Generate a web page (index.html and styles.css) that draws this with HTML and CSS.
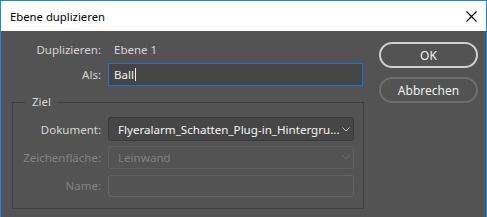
FILE: index.html
```html
<!DOCTYPE html>
<html lang="de">
<head>
<meta charset="utf-8">
<title>Ebene duplizieren</title>
<link rel="stylesheet" href="styles.css">
</head>
<body>
<div class="window">
  <div class="titlebar">
    <span class="title">Ebene duplizieren</span>
    <svg class="close" width="11" height="11" viewBox="0 0 11 11"><path d="M0.5 0.5 L10.5 10.5 M10.5 0.5 L0.5 10.5" stroke="#000" stroke-width="1.1" fill="none"/></svg>
  </div>
  <div class="content">
    <div class="fields">
      <div class="grid top">
        <span class="label">Duplizieren:</span>
        <span class="value">Ebene 1</span>
        <span class="label">Als:</span>
        <div class="input focus"><span class="typed">Ball</span><span class="caret"></span></div>
      </div>
      <fieldset class="group">
        <legend>Ziel</legend>
        <div class="grid inner">
          <span class="label">Dokument:</span>
          <div class="select"><span class="sel-text">Flyeralarm_Schatten_Plug-in_Hintergru...</span>
            <svg class="chev" width="8" height="5" viewBox="0 0 8 5"><path d="M0.5 0.5 L4 4 L7.5 0.5" stroke="#c4c4c4" stroke-width="1" fill="none"/></svg>
          </div>
          <span class="label disabled">Zeichenfläche:</span>
          <div class="select off"><span class="sel-text">Leinwand</span>
            <svg class="chev" width="8" height="5" viewBox="0 0 8 5"><path d="M0.5 0.5 L4 4 L7.5 0.5" stroke="#6b6b6b" stroke-width="1" fill="none"/></svg>
          </div>
          <span class="label disabled">Name:</span>
          <div class="input off"></div>
        </div>
      </fieldset>
    </div>
    <div class="buttons">
      <div class="btn primary">OK</div>
      <div class="btn">Abbrechen</div>
    </div>
  </div>
</div>
</body>
</html>
```
FILE: styles.css
```css
html, body {
  margin: 0;
  padding: 0;
  background: #535353;
}
body {
  width: 487px;
  height: 217px;
  overflow: hidden;
  font-family: "Noto Sans", "Open Sans", sans-serif;
}
.window {
  box-sizing: border-box;
  width: 487px;
  height: 217px;
  border: 1px solid #1c86dc;
  border-bottom: none;
  background: #535353;
  display: flex;
  flex-direction: column;
}
.titlebar {
  height: 30px;
  background: #ffffff;
  display: flex;
  align-items: center;
  justify-content: space-between;
  padding: 0 9px 0 8px;
  flex: none;
}
.title {
  font-size: 11.3px;
  color: #000;
  padding-left: 1px;
}
.close {
  display: block;
}
.content {
  display: flex;
  padding: 0 0 0 11px;
  gap: 15px;
}
.fields {
  width: 352px;
}
.grid {
  display: grid;
  align-items: center;
  column-gap: 6px;
}
.top {
  grid-template-columns: 90px 255px;
  grid-template-rows: 18px 23px;
  row-gap: 5px;
  padding-top: 9px;
}
.label {
  text-align: right;
  font-size: 11.5px;
  color: #d4d4d4;
  white-space: nowrap;
  padding-right: 1px;
}
.label.disabled {
  color: #828282;
}
.value {
  font-size: 11.5px;
  color: #d4d4d4;
  padding-left: 6px;
}
.input {
  box-sizing: border-box;
  height: 23px;
  border: 1px solid #616161;
  display: flex;
  align-items: center;
  padding-left: 5px;
  font-size: 11.5px;
  color: #f2f2f2;
}
.input.focus {
  border-color: #1f6fd6;
  background: #454545;
}
.caret {
  width: 1px;
  height: 13px;
  background: #f2f2f2;
  margin-left: 1px;
}
.input.off {
  height: 22px;
  border-radius: 2px;
  margin-top: 2px;
}
.group {
  margin: 8px 0 0 0;
  padding: 7px 9px 12px 0;
  border: 1px solid #3e3e3e;
  width: 352px;
  box-sizing: border-box;
}
.group legend {
  margin-left: 12px;
  padding: 0 6px 0 7px;
  font-size: 11.5px;
  line-height: 16px;
  color: #d4d4d4;
}
.inner {
  grid-template-columns: 89px 246px;
  grid-template-rows: 24px 23px 22px;
  row-gap: 5px;
}
.select {
  box-sizing: border-box;
  height: 24px;
  border: 1px solid #3a3a3a;
  border-radius: 3px;
  background: #464646;
  display: flex;
  align-items: center;
  justify-content: space-between;
  padding: 0 3px 0 9px;
}
.select.off {
  height: 23px;
  border-color: #5f5f5f;
  background: #535353;
}
.sel-text {
  font-size: 11.6px;
  color: #f4f4f4;
  white-space: nowrap;
}
.select.off .sel-text {
  color: #808080;
}
.chev {
  display: block;
  flex: none;
}
.buttons {
  display: flex;
  flex-direction: column;
  gap: 9px;
  padding-top: 11px;
}
.btn {
  box-sizing: border-box;
  width: 99px;
  height: 26px;
  border: 2px solid #6e6e6e;
  border-radius: 13px;
  display: flex;
  align-items: center;
  justify-content: center;
  font-size: 12px;
  color: #f0f0f0;
}
.btn.primary {
  border-color: #cfcfcf;
}
```
